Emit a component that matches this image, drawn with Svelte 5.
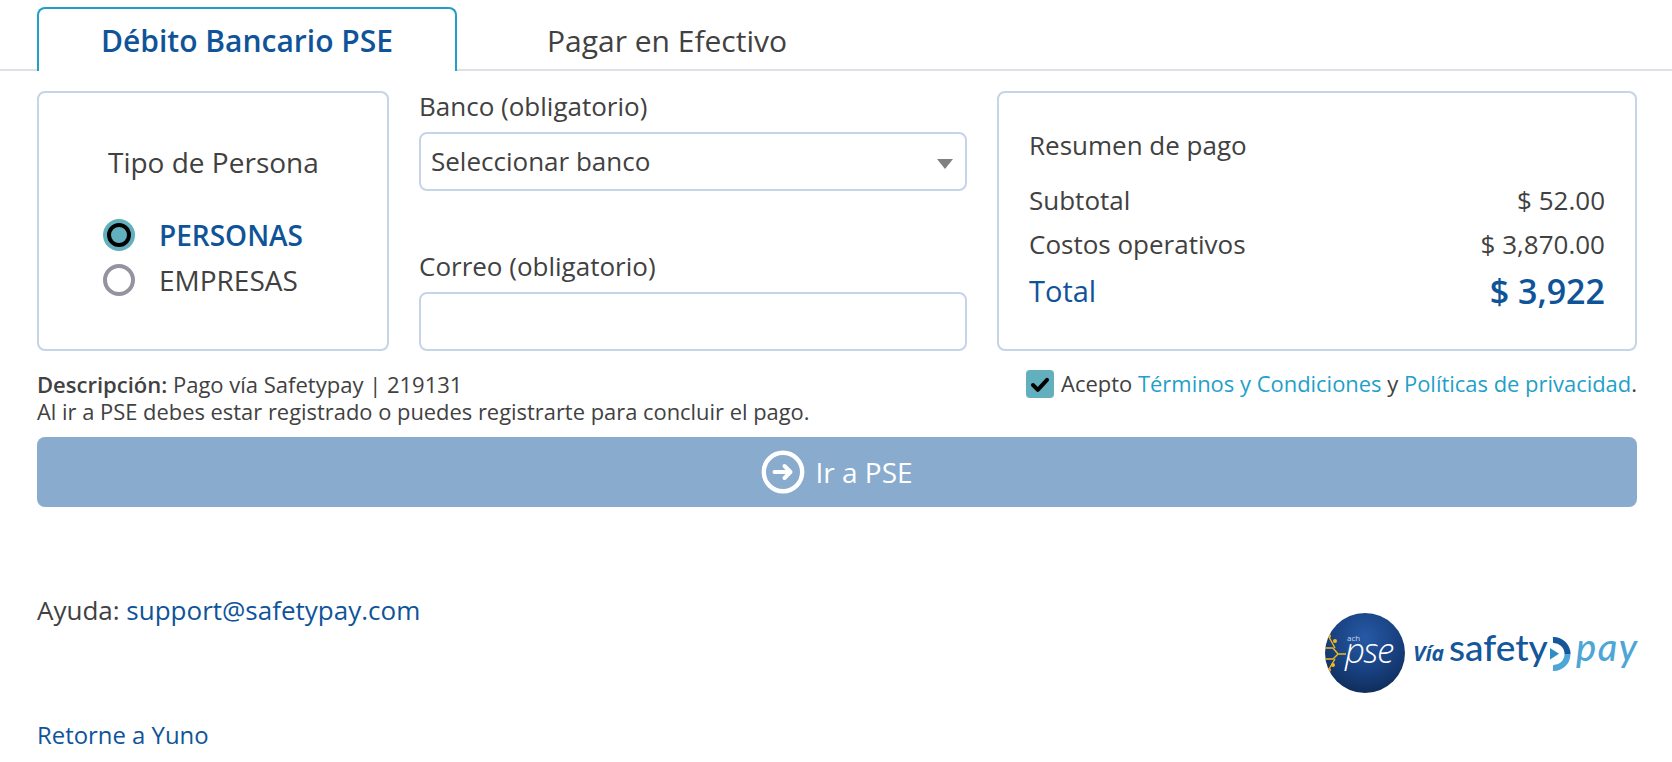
<script>
  const radios = [
    { label: 'PERSONAS', on: true },
    { label: 'EMPRESAS', on: false }
  ];
</script>

<div class="page">
  <nav class="tabs">
    <div class="tab active">Débito Bancario PSE</div>
    <div class="tab">Pagar en Efectivo</div>
  </nav>

  <div class="content">
    <section class="row">
      <div class="card persona">
        <h3>Tipo de Persona</h3>
        <div class="radios">
          {#each radios as r}
            <div class="radio" class:on={r.on}>
              <span class="dot"></span>
              <span>{r.label}</span>
            </div>
          {/each}
        </div>
      </div>

      <div class="fields">
        <div class="field">
          <span class="lab">Banco (obligatorio)</span>
          <div class="control select">
            <span>Seleccionar banco</span>
            <i class="caret"></i>
          </div>
        </div>
        <div class="field">
          <span class="lab">Correo (obligatorio)</span>
          <div class="control"></div>
        </div>
      </div>

      <div class="card summary">
        <div class="sumtitle">Resumen de pago</div>
        <div class="line"><span>Subtotal</span><span>$ 52.00</span></div>
        <div class="line"><span>Costos operativos</span><span>$ 3,870.00</span></div>
        <div class="line total"><span>Total</span><b>$ 3,922</b></div>
      </div>
    </section>

    <section class="info">
      <div class="desc">
        <div><b>Descripción:</b> Pago vía Safetypay | 219131</div>
        <div class="second">Al ir a PSE debes estar registrado o puedes registrarte para concluir el pago.</div>
      </div>
      <div class="terms">
        <span class="check">
          <svg viewBox="0 0 28 28" width="28" height="28"><path d="M7 15l4.8 4.8L21 9.8" fill="none" stroke="#000" stroke-width="4" stroke-linecap="round" stroke-linejoin="round"/></svg>
        </span>
        <span>Acepto <a href="#t">Términos y Condiciones</a> y <a href="#p">Políticas de privacidad</a>.</span>
      </div>
    </section>

    <button class="go">
      <svg viewBox="0 0 44 44" width="44" height="44"><circle cx="22" cy="22" r="19.2" fill="none" stroke="#fff" stroke-width="4.4"/><path d="M13.5 22h15.5M23.5 16l6 6-6 6" fill="none" stroke="#fff" stroke-width="4" stroke-linejoin="round" stroke-linecap="round"/></svg>
      <span>Ir a PSE</span>
    </button>

    <section class="foot">
      <div class="help">Ayuda: <a href="#m">support@safetypay.com</a></div>
      <svg class="logo" viewBox="0 0 316 82" width="316" height="82">
        <defs>
          <radialGradient id="g" cx="0.5" cy="0.3" r="0.75">
            <stop offset="0" stop-color="#2759a6"/>
            <stop offset="0.6" stop-color="#173f7d"/>
            <stop offset="1" stop-color="#0e2a55"/>
          </radialGradient>
          <clipPath id="c"><circle cx="40" cy="40" r="40"/></clipPath>
        </defs>
        <circle cx="40" cy="40" r="40" fill="url(#g)"/>
        <g clip-path="url(#c)">
          <g fill="none" stroke="#f2b81e" stroke-width="1.4">
            <path d="M0 35h8l5 6h8M0 46h8l5-5"/>
            <path d="M4 24l6 11M4 56l6-10"/>
          </g>
          <g fill="#f2b81e">
            <circle cx="4" cy="23" r="2"/><circle cx="10" cy="28" r="2"/>
            <circle cx="8" cy="52" r="2"/><circle cx="4" cy="57" r="2"/>
          </g>
        </g>
        <text x="20" y="50" class="t-pse">pse</text>
        <text x="22" y="28" class="t-ach">ach</text>
        <text x="88" y="48" class="t-via">Vía</text>
        <text x="124" y="48" class="t-safety">safety</text>
        <path d="M225 35l9 5.8-9 5.8z" fill="#2f8cc4"/>
        <path d="M228 27a14 14 0 0 1 14.5 14" fill="none" stroke="#15579a" stroke-width="6"/>
        <path d="M242.5 41a14 14 0 0 1-14.5 14" fill="none" stroke="#4da6d6" stroke-width="6"/>
        <text x="251" y="48" class="t-pay">pay</text>
      </svg>
    </section>

    <a class="back" href="#b">Retorne a Yuno</a>
  </div>
</div>

<style>
  :global(body) { margin: 0; background: #fff; }
  .page { font-family: "Open Sans", sans-serif; color: #414141; height: 762px; overflow: hidden; }
  a { color: #0f5499; text-decoration: none; }

  .tabs { display: flex; padding: 7px 0 0 37px; border-bottom: 2px solid #dde1e6; height: 62px; }
  .tab { width: 420px; height: 64px; box-sizing: border-box; text-align: center; font-size: 30px; line-height: 67px; }
  .active { color: #0f5499; font-weight: 600; background: #fff; border: 2px solid #1f9fc9; border-bottom: 0; border-radius: 8px 8px 0 0; line-height: 63px; }

  .content { padding: 0 35px 0 37px; }
  .row { display: grid; grid-template-columns: 352px 548px 640px; column-gap: 30px; margin-top: 20px; height: 260px; }
  .card { box-sizing: border-box; border: 2px solid #c5d4e6; border-radius: 8px; }

  .persona { padding: 50px 0 0 65px; }
  h3 { margin: 0 0 0 4px; font-size: 28px; font-weight: 400; line-height: 38px; }
  .radios { margin-top: 31.5px; }
  .radio { display: flex; align-items: center; gap: 24px; font-size: 28px; height: 45px; }
  .radio.on { color: #0f5499; font-weight: 600; }
  .dot { width: 32px; height: 32px; box-sizing: border-box; border-radius: 50%; border: 4.5px solid #95939f; background: #fff; margin-left: -1px; }
  .on .dot { border: 0; background: #62b0bd; position: relative; }
  .on .dot::after { content: ""; position: absolute; inset: 4px; border: 4.5px solid #000; border-radius: 50%; background: #62b0bd; }

  .fields { display: flex; flex-direction: column; }
  .field { display: flex; flex-direction: column; height: 161px; }
  .lab { font-size: 26px; line-height: 36px; margin-bottom: 8px; margin-top: -3px; }
  .field + .field { height: 99px; margin-top: 0; }
  .field + .field .lab { margin-top: -4px; }
  .control { height: 59px; box-sizing: border-box; border: 2px solid #c5d4e6; border-radius: 8px; display: flex; align-items: center; padding: 0 10px; font-size: 26px; flex: none; }
  .select { justify-content: space-between; padding-bottom: 2px; }
  .caret { width: 0; height: 0; border-left: 8px solid transparent; border-right: 8px solid transparent; border-top: 10px solid #808080; margin-right: 2px; margin-top: 6px; }

  .summary { padding: 34px 30px 0; font-size: 26px; }
  .sumtitle { line-height: 36px; margin-bottom: 19px; }
  .line { display: flex; justify-content: space-between; align-items: center; line-height: 36px; margin-bottom: 8px; }
  .total { color: #0f5499; font-size: 29px; margin-top: 11px; }
  .total b { font-size: 34px; font-weight: 600; }

  .info { display: flex; justify-content: space-between; margin-top: 19px; font-size: 22px; line-height: 28px; }
  .desc b { font-weight: 600; }
  .second { font-size: 21.9px; }
  .terms { display: flex; align-items: flex-start; gap: 7px; font-size: 21.95px; }
  .terms a { color: #1f9fc9; }
  .check { width: 28px; height: 28px; border-radius: 4px; background: #62b0bd; display: block; }
  .check svg { display: block; }

  .go { display: flex; width: 100%; height: 70px; margin: 11px 0 0; align-items: center; justify-content: center; gap: 10px; border: 0; border-radius: 8px; background: #89abcd; color: #fff; font: 400 28px "Open Sans", sans-serif; }
  .go svg { display: block; }

  .foot { height: 179px; display: flex; justify-content: space-between; align-items: flex-start; }
  .help { font-size: 26px; line-height: 36px; margin-top: 85px; }
  .logo { margin-top: 106px; margin-right: -4px; display: block; }
  .back { display: block; font-size: 23.9px; line-height: 32px; margin-top: 33px; }
  .t-pse { font: italic 300 35px "Open Sans", sans-serif; fill: #fff; letter-spacing: -1.5px; }
  .t-ach { font: 400 8px "Open Sans", sans-serif; fill: #c9d7ea; }
  .t-via { font: italic 700 21px "Open Sans", sans-serif; fill: #15579a; }
  .t-safety { font: 500 37px Lato, sans-serif; fill: #15579a; }
  .t-pay { font: italic 500 38px Lato, sans-serif; fill: #4da6d6; letter-spacing: 1.5px; }
</style>
